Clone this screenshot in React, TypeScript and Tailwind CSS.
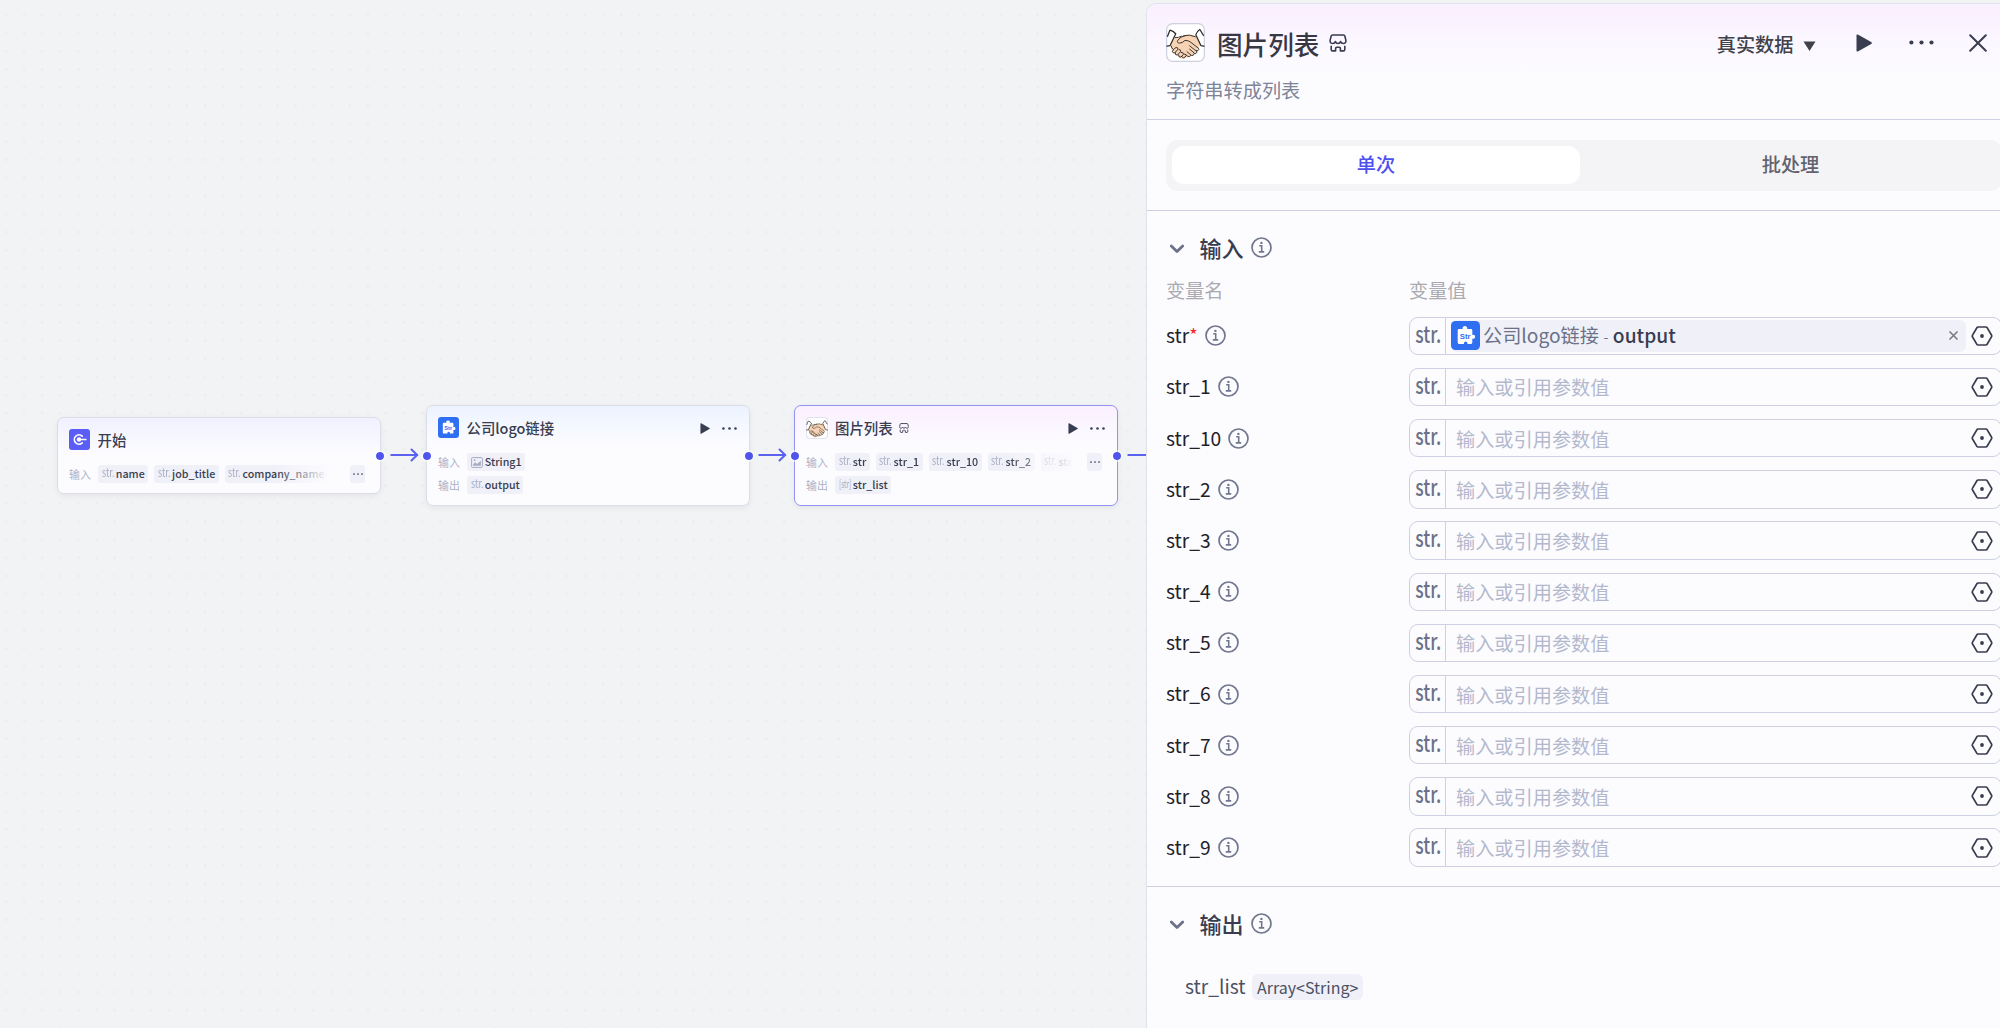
import React from 'react';

type IconProps = { className?: string };

function InfoIcon() {
  return (
    <svg className="size-[21px] shrink-0 text-[#70768d]" viewBox="0 0 21 21" fill="none" stroke="currentColor">
      <circle cx="10.5" cy="10.5" r="9.5" strokeWidth="1.7" />
      <path d="M8.2 8.7h2.5v6M7.8 14.9h5.4" strokeWidth="1.6" />
      <circle cx="10.4" cy="5.9" r="1.2" fill="currentColor" stroke="none" />
    </svg>
  );
}

function HexIcon() {
  return (
    <svg className="h-[20px] w-[22px] shrink-0 text-[#383d4d]" viewBox="0 0 22 20" fill="none" stroke="currentColor">
      <path
        d="M7.1 1h7.8q.8 0 1.2.7l4.5 7.6q.4.7 0 1.4l-4.5 7.6q-.4.7-1.2.7H7.1q-.8 0-1.2-.7L1.4 10.7q-.4-.7 0-1.4L5.9 1.7Q6.3 1 7.1 1z"
        strokeWidth="1.7"
      />
      <circle cx="11" cy="10" r="1.9" fill="currentColor" stroke="none" />
    </svg>
  );
}

function StoreIcon({ className = '' }: IconProps) {
  return (
    <svg className={className} viewBox="0 0 18 18" fill="none" stroke="currentColor" strokeWidth="1.6" strokeLinejoin="round">
      <path d="M3.6 1h10.800q1.200 0 1.500 1.200l1 4.200c.3 2-1 3.100-2.600 3.100-1.300 0-2.300-.8-2.700-2-.4 1.200-1.400 2-2.600 2s-2.200-.8-2.600-2c-.4 1.200-1.400 2-2.700 2C2.100 9.500.8 8.400 1.100 6.400l1-4.200Q2.400 1 3.600 1z" />
      <path d="M2.200 11.700v3.800q0 1.400 1.400 1.400h3v-2.500q0-1.200 1.200-1.200h2.400q1.200 0 1.200 1.200v2.500h3q1.400 0 1.400-1.400v-3.800" />
    </svg>
  );
}

function PuzzleIcon({ className = '' }: IconProps) {
  return (
    <svg className={className} viewBox="0 0 29 29">
      <rect width="29" height="29" rx="4.5" fill="#2f6ff2" />
      <path
        fill="#fff"
        d="M8 8h3.600a2.400 2.400 0 1 1 4.600 0H20q1.300 0 1.300 1.300V14a2 2 0 1 1 0 3.600v4q0 1.300-1.300 1.300h-3.600v-.7a1.700 1.700 0 0 0-3.400 0v.7H8q-1.300 0-1.300-1.300V9.300Q6.700 8 8 8z"
      />
      <text x="14.2" y="18" textAnchor="middle" fontSize="7.8" fontWeight="700" fontFamily="Liberation Sans, sans-serif" fill="#2f6ff2">
        Str
      </text>
    </svg>
  );
}

function StartIcon() {
  return (
    <svg className="size-[21px] shrink-0" viewBox="0 0 21 21">
      <rect width="21" height="21" rx="3" fill="#5b5ef6" />
      <path d="M13.200 7.200a4.600 4.600 0 1 0 0 6.600" fill="none" stroke="#fff" strokeWidth="1.7" strokeLinecap="round" />
      <circle cx="10" cy="10.5" r="2.2" fill="#fff" />
      <path d="M10 10.500h6.800" stroke="#fff" strokeWidth="1.7" strokeLinecap="round" />
    </svg>
  );
}

function HandshakeIcon({ className = '' }: IconProps) {
  return (
    <svg className={className} viewBox="0 0 38 38">
      <rect x="0.6" y="0.6" width="36.8" height="36.8" rx="6" fill="#fff" stroke="#cdd0df" strokeWidth="1.2" />
      <path
        d="M7.500 14.500q4.500.5 8-1.800 6-2.200 10.500-.9l4.500 1.700 3 7-2 4.500-3.500 5-4.500 3-5 1q-2.500 1.500-4 .5l-5.500-4L4.800 25Q3.800 21.500 5.500 19z"
        fill="#f7d3b4"
      />
      <g fill="none" stroke="#2b2a2a" strokeLinecap="round" strokeLinejoin="round">
        <g strokeWidth="1.2">
          <path d="M1 22.500l3-.5 5.500-11.500Q7 7.600 3.800 7L1.500 13" />
          <path d="M37 22.500l-3-.5-5-10.500q1-3.500 4-5.200L36.500 12" />
        </g>
        <g strokeWidth="0.9">
          <path d="M9 14.200q3.500.3 6-1.300M17 12.500q6-1.800 11.500.8" />
          <path d="M18.500 12.300q-4.500 1-7 4.500-1.200 2.700 1.500 2.800 3 .1 5.500-2.600 3-.3 5.500 1.700l7.500 5.800q1.300 1.700-.5 2.500-1.700.3-3-.8l-5-4" />
          <path d="M30 27.200q.7 2.300-1.600 2.800l-5.400-4.500M27.500 30q-.5 2.300-2.700 1.600l-4.300-3.600M24 31.800q-1.200 1.900-3 .5l-2.500-2" />
          <path d="M5 22.500q.2 2.200 2.300 3.300-2 2-.4 3.200 1.400.5 2.600-.8l2-2.500q.5-2-1.500-1.900-1.500.6-2.700 2M9 29q-.3 2.800 2.200 2.200l3-3.200q.7-2.200-1.500-2.300M12.200 31.200q0 2.600 2.400 2l2.400-2.600q.3-2.200-2-2M15.500 33q1.500 1.800 3 .2l1.300-1.500q0-1.200-1.500-1.200" />
        </g>
      </g>
    </svg>
  );
}

function PlayIcon({ className = '' }: IconProps) {
  return (
    <svg className={className} viewBox="0 0 16 18">
      <path d="M.5 1.500Q.5 0 1.800.6l13.400 7.500q1.300.9 0 1.800L1.800 17.400Q.5 18 .5 16.500z" fill="#383d50" />
    </svg>
  );
}

function DotsIcon({ className = '' }: IconProps) {
  return (
    <svg className={className} viewBox="0 0 25 5" fill="#383d50">
      <circle cx="2.4" cy="2.5" r="2.1" />
      <circle cx="12.5" cy="2.5" r="2.1" />
      <circle cx="22.5" cy="2.5" r="2.1" />
    </svg>
  );
}

function Chevron() {
  return (
    <svg className="h-[10px] w-[16px] shrink-0" viewBox="0 0 16 10" fill="none">
      <path d="M2.300 2l5.700 5.500L13.700 2" stroke="#6b7188" strokeWidth="2.8" strokeLinecap="round" strokeLinejoin="round" />
    </svg>
  );
}

function ImageTypeIcon() {
  return (
    <svg className="h-[11px] w-[12px] shrink-0" viewBox="0 0 12 11" fill="none" stroke="#a6abc3">
      <rect x="0.6" y="0.6" width="10.8" height="9.8" rx="0.8" />
      <path d="M2 8.800V7.600L4.300 5.300 6 6.900l3.900-3.200v5.100z" fill="#a6abc3" stroke="none" />
      <circle cx="3.6" cy="3.2" r="0.9" fill="#a6abc3" stroke="none" />
    </svg>
  );
}

function Tag({ list = false, label, icon = false }: { list?: boolean; label: string; icon?: boolean }) {
  return (
    <span className="flex h-[18px] shrink-0 items-center rounded-[3px] bg-[#f0f0f8] px-[3.5px] whitespace-nowrap">
      {icon ? (
        <ImageTypeIcon />
      ) : (
        <span className="w-[12px] text-[11.5px] leading-none text-[#a6abc3]">
          {list ? (
            <span className="inline-block origin-left -translate-y-[1px] scale-x-[.62] text-[10.5px]">[str]</span>
          ) : (
            <span className="inline-block origin-left -translate-y-[1px] scale-x-[.76]">str.</span>
          )}
        </span>
      )}
      <span className="ml-[2.3px] text-[10.7px] leading-none font-medium text-[#383d50]">{label}</span>
    </span>
  );
}

function MoreTag() {
  return (
    <span className="ml-auto flex h-[18px] w-[15px] items-center justify-center rounded-[3px] bg-[#f0f0f8]">
      <DotsIcon className="h-[2px] w-[10px]" />
    </span>
  );
}

function RowLabel({ children }: { children: React.ReactNode }) {
  return <span className="w-[29px] shrink-0 text-[10.9px] leading-none text-[#aeb2c8]">{children}</span>;
}

function Port({ className = '' }: IconProps) {
  return <span className={'absolute size-[8px] rounded-full bg-[#4e54ec] outline-2 outline-white/50 ' + className} />;
}

function NodeActions() {
  return (
    <span className="mt-[2px] ml-auto flex items-center gap-[12.5px]">
      <PlayIcon className="h-[11px] w-[10px]" />
      <DotsIcon className="h-[3px] w-[15px]" />
    </span>
  );
}

function Connector({ className = '' }: IconProps) {
  return (
    <svg className={'absolute h-[14px] w-[30px] ' + className} viewBox="0 0 30 14" fill="none" stroke="#5c61ee" strokeWidth="2">
      <path d="M0.500 7h27" />
      <path d="M21.500 1.500L27.200 7l-5.700 5.500" strokeLinecap="round" />
    </svg>
  );
}

function Canvas() {
  return (
    <div className="relative h-full w-[1146px] shrink-0 overflow-hidden bg-[#f1f3f5] bg-[radial-gradient(circle_at_center,#ecedf0_1px,transparent_1.6px)] bg-[size:18.1px_18.1px] bg-[position:-3px_6px]">
      <section className="absolute top-[417px] left-[57px] h-[77px] w-[324px] rounded-[7px] border border-[#dcdde8] bg-[#fcfcff] bg-linear-to-b from-[#f1f1ff] to-[#fcfcff] to-50% px-[11px] pt-[11px] shadow-[0_2px_6px_rgba(0,0,0,0.06)]">
        <header className="flex h-[21px] items-center">
          <StartIcon />
          <h2 className="mt-[2px] ml-[7.5px] text-[14.4px] leading-none font-medium text-[#383d50]">开始</h2>
        </header>
        <div className="mt-[15px] flex items-center pr-[4px]">
          <RowLabel>输入</RowLabel>
          <div className="flex w-[236px] gap-[6px] overflow-hidden mask-r-from-75% mask-r-to-98%">
            <Tag label="name" />
            <Tag label="job_title" />
            <Tag label="company_name" />
          </div>
          <MoreTag />
        </div>
        <Port className="top-[34px] -right-[4px]" />
      </section>

      <Connector className="top-[448px] left-[389.5px]" />

      <section className="absolute top-[405px] left-[426px] h-[101px] w-[324px] rounded-[7px] border border-[#dcdde8] bg-[#fcfcff] bg-linear-to-b from-[#ecf3ff] to-[#fcfcff] to-40% px-[11px] pt-[11px] shadow-[0_2px_6px_rgba(0,0,0,0.06)]">
        <header className="flex h-[21px] items-center pr-[1px]">
          <PuzzleIcon className="size-[21px]" />
          <h2 className="mt-[2px] ml-[7.5px] text-[14.4px] leading-none font-medium text-[#383d50]">公司logo链接</h2>
          <NodeActions />
        </header>
        <div className="mt-[15px] flex items-center">
          <RowLabel>输入</RowLabel>
          <Tag label="String1" icon />
        </div>
        <div className="mt-[5px] flex items-center">
          <RowLabel>输出</RowLabel>
          <Tag label="output" />
        </div>
        <Port className="top-[46px] -left-[4.5px]" />
        <Port className="top-[46px] -right-[4px]" />
      </section>

      <Connector className="top-[448px] left-[758px]" />

      <section className="absolute top-[405px] left-[794px] h-[101px] w-[324px] rounded-[7px] border border-[#9391f5] bg-[#fcfcff] bg-linear-to-b from-[#faf0ff] to-[#fcfcff] to-40% px-[11px] pt-[11px] shadow-[0_2px_6px_rgba(0,0,0,0.06)]">
        <header className="flex h-[21px] items-center pr-[1px]">
          <HandshakeIcon className="size-[22px]" />
          <h2 className="mt-[2px] ml-[7px] text-[14.4px] leading-none font-medium text-[#383d50]">图片列表</h2>
          <StoreIcon className="ml-[6px] size-[10px] text-[#383d50]" />
          <NodeActions />
        </header>
        <div className="mt-[15px] flex items-center pr-[4px]">
          <RowLabel>输入</RowLabel>
          <div className="flex w-[252px] gap-[6px] overflow-hidden mask-r-from-68% mask-r-to-95%">
            <Tag label="str" />
            <Tag label="str_1" />
            <Tag label="str_10" />
            <Tag label="str_2" />
            <Tag label="str_3" />
          </div>
          <MoreTag />
        </div>
        <div className="mt-[5px] flex items-center">
          <RowLabel>输出</RowLabel>
          <Tag list label="str_list" />
        </div>
        <Port className="top-[46px] -left-[4px]" />
        <Port className="top-[46px] -right-[4px]" />
      </section>

      <Connector className="top-[448px] left-[1127px]" />
    </div>
  );
}

const optionalParams = ['str_1', 'str_10', 'str_2', 'str_3', 'str_4', 'str_5', 'str_6', 'str_7', 'str_8', 'str_9'];

function ParamRow({ name, required = false, children }: { name: string; required?: boolean; children: React.ReactNode }) {
  return (
    <div className="flex h-[38.4px] items-center">
      <div className="flex w-[243px] shrink-0 items-center text-[19.2px] leading-none text-[#1f2129]">
        <span>{name}</span>
        {required && <span className="-mt-[4px] text-[18px] text-[#f5222d]">*</span>}
        <span className="ml-[7px]">
          <InfoIcon />
        </span>
      </div>
      <div className="flex h-[38.4px] flex-1 items-center rounded-[9px] border border-[#ccd0e2] pr-[8px]">
        <span className="flex h-full w-[36px] shrink-0 items-center justify-center border-r border-[#ccd0e2] text-[#6b7188]">
          <span className="inline-block translate-x-[0.5px] -translate-y-[3px] scale-x-[.78] text-[22.5px] leading-none font-medium">str.</span>
        </span>
        {children}
        <HexIcon />
      </div>
    </div>
  );
}

function SectionTitle({ children }: { children: React.ReactNode }) {
  return (
    <div className="flex h-[24px] items-center">
      <span className="mt-px ml-[3px]">
        <Chevron />
      </span>
      <h3 className="-mt-[3px] ml-[14.5px] text-[22px] leading-none font-medium text-[#383d50]">{children}</h3>
      <span className="-mt-px ml-[7.5px]">
        <InfoIcon />
      </span>
    </div>
  );
}

function Panel() {
  return (
    <aside className="mt-[3px] flex h-[1040px] w-[856px] shrink-0 flex-col rounded-tl-[10px] border-t border-l border-[#e0e3ec] bg-[#fcfcff]">
      <header className="h-[116px] shrink-0 rounded-tl-[10px] border-b border-[#ccd0e2] bg-linear-to-b from-[#faf0ff] to-[#fcfcff] to-60% pt-[19px] pl-[19px]">
        <div className="flex h-[39px] items-center">
          <HandshakeIcon className="size-[39px]" />
          <h1 className="mt-[2px] ml-[12px] text-[25.6px] leading-none font-medium text-[#383743]">图片列表</h1>
          <StoreIcon className="ml-[10px] size-[18px] text-[#383d50]" />
          <button className="mt-[4px] ml-auto flex items-center gap-[9px] text-[19.2px] leading-none font-medium text-[#41414a]">
            真实数据
            <svg className="mt-[3px] h-[10px] w-[13px]" viewBox="0 0 13 10">
              <path d="M.5.500h12L6.500 10z" fill="#41414a" />
            </svg>
          </button>
          <PlayIcon className="ml-[40.5px] h-[18px] w-[16px]" />
          <DotsIcon className="ml-[37px] h-[5px] w-[25px]" />
          <svg className="mr-[15px] ml-[35px] size-[18px]" viewBox="0 0 18 18" stroke="#383d50" strokeWidth="2" strokeLinecap="round">
            <path d="M1.200 1.200l15.600 15.600M16.800 1.200L1.200 16.800" />
          </svg>
        </div>
        <p className="mt-[19px] text-[19.2px] leading-none text-[#7e8498]">字符串转成列表</p>
      </header>

      <div className="h-[91px] shrink-0 border-b border-[#ccd0e2] pt-[20px] pl-[19px]">
        <div className="flex h-[51px] w-[836px] rounded-[12px] bg-[#f4f4f7] px-[6px] pt-[6px] pb-[7px] text-[19.2px] leading-none font-medium">
          <button className="flex w-[408px] items-center justify-center rounded-[12px] bg-white pb-px text-[#4e50f0]">单次</button>
          <button className="ml-[5px] flex flex-1 items-center justify-center pb-px text-[#62636f]">批处理</button>
        </div>
      </div>

      <section className="h-[676px] shrink-0 border-b border-[#ccd0e2] pt-[25px] pl-[19px]">
        <SectionTitle>输入</SectionTitle>
        <div className="mt-[21px] flex h-[19px] items-center text-[19.2px] leading-none text-[#aaaab0]">
          <span className="w-[243px]">变量名</span>
          <span>变量值</span>
        </div>
        <div className="mt-[16.6px] flex w-[836px] flex-col gap-[12.8px]">
          <ParamRow name="str" required>
            <div className="mr-[5px] ml-[5px] flex h-[32px] flex-1 items-center rounded-[6px] bg-[#f0f0f8] pr-[8px] text-[19.2px] leading-none">
              <PuzzleIcon className="size-[29px]" />
              <span className="ml-[3px] text-[#6b7188]">公司logo链接</span>
              <span className="ml-[4.5px] text-[14px] text-[#6b7188]">-</span>
              <span className="ml-[4.5px] font-medium text-[#383d50]">output</span>
              <svg className="ml-auto size-[9px]" viewBox="0 0 9 9" stroke="#77777d" strokeWidth="1.5">
                <path d="M.5.500l8 8M8.500.500l-8 8" />
              </svg>
            </div>
          </ParamRow>
          {optionalParams.map((name) => (
            <ParamRow key={name} name={name}>
              <span className="flex-1 pt-[2px] pl-[10px] text-[19.2px] leading-none text-[#b4b8cd]">输入或引用参数值</span>
            </ParamRow>
          ))}
        </div>
      </section>

      <section className="pt-[25px] pl-[19px]">
        <SectionTitle>输出</SectionTitle>
        <div className="mt-[38px] ml-[19px] flex items-center text-[#4b5063]">
          <span className="text-[19.2px] leading-none">str_list</span>
          <span className="ml-[7px] flex h-[26px] items-center rounded-[6px] bg-[#f0f0f8] px-[4.5px] pb-px text-[16px] leading-none text-[#4b5063]">
            {'Array<String>'}
          </span>
        </div>
      </section>
    </aside>
  );
}

export default function App() {
  return (
    <main className="flex h-[1028px] w-[2000px] overflow-hidden bg-[#f1f3f5] font-['Noto_Sans_CJK_SC','Noto_Sans',sans-serif]">
      <Canvas />
      <Panel />
    </main>
  );
}
